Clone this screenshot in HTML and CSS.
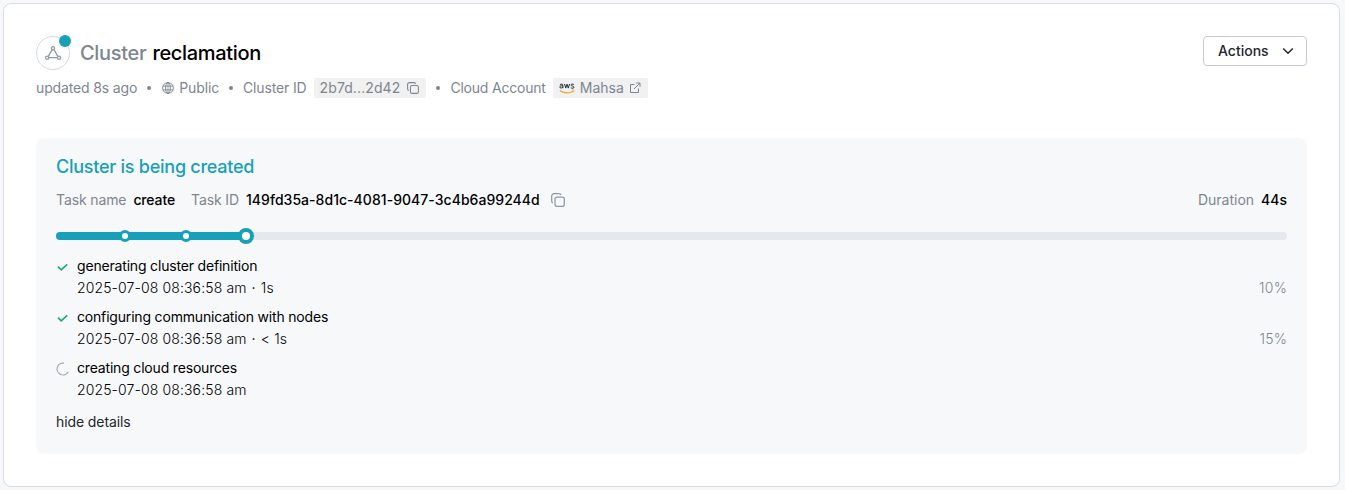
FILE: index.html
```html
<!DOCTYPE html>
<html lang="en">
<head>
<meta charset="utf-8">
<title>Cluster reclamation</title>
<link rel="stylesheet" href="styles.css">
</head>
<body>
<main class="card">
  <header class="header">
    <div class="title-row">
      <div class="avatar">
        <svg width="18" height="18" viewBox="0 0 18 18" fill="none" stroke="#8d99a8" stroke-width="1.3"><path d="M8.2 5.700 4.300 12.300M9.900 5.700l3.900 6.600M4.800 13.700h8.500"/><circle cx="9" cy="4.200" r="1.600"/><circle cx="3.100" cy="13.700" r="1.600"/><circle cx="15" cy="13.700" r="1.600"/></svg>
        <span class="status"></span>
      </div>
      <h1 class="title"><span class="title-kind">Cluster</span> <span class="title-name">reclamation</span></h1>
    </div>
    <button class="actions"><span>Actions</span>
      <svg width="12" height="8" viewBox="0 0 12 8" fill="none" stroke="#22262b" stroke-width="1.5"><path d="M1.2 1.5 6 6.2l4.8-4.7"/></svg>
    </button>
  </header>
  <div class="meta">
    <span class="updated">updated 8s ago</span>
    <i class="dot"></i>
    <span class="public">
      <svg width="12" height="12" viewBox="0 0 12 12" fill="none" stroke="#7d868f" stroke-width=".9"><circle cx="6" cy="6" r="5.4"/><ellipse cx="6" cy="6" rx="2.5" ry="5.4"/><path d="M.9 4.1h10.2M.9 7.9h10.2M6 .6v10.8"/></svg>
      <span>Public</span>
    </span>
    <i class="dot"></i>
    <span class="pair"><span class="cluster-label">Cluster ID</span>
      <span class="chip chip-id"><span class="cluster-id">2b7d...2d42</span>
        <svg width="12" height="12" viewBox="0 0 14 14" fill="none" stroke="#7d868f" stroke-width="1.25"><rect x="4" y="4" width="9.3" height="9.3" rx="2"/><path d="M2 10C1.1 9.700.7 9 .7 8V3C.7 1.600 1.600.7 3 .7h5c1 0 1.700.4 2 1.300"/></svg>
      </span>
    </span>
    <i class="dot"></i>
    <span class="pair"><span class="account-label">Cloud Account</span>
      <span class="chip chip-aws">
        <svg width="16" height="11" viewBox="0 0 16 11" fill="none"><g stroke="#27303c" stroke-width="1"><path d="M.9 1.600C2.500.8 3.900 1 3.900 2.300v2.900M3.900 2.900C2.300 2.600.8 2.800.8 4c0 1.500 2.300 1.300 3.100.1"/><path d="M5.500 1l1.300 4.100L8 1.200l1.300 3.900L10.500 1"/><path d="M14.900 1.500C13.500.8 12 1 12 2.100c0 1.200 3 .8 3 2.100 0 1.200-1.800 1.300-3.200.6"/></g><path d="M.8 7.500c4.100 2.900 9.200 3 13.400.8" stroke="#f7a036" stroke-width="1.250"/><path d="M12.800 7.100c1.600-.4 2.600-.1 2.200.9-.2.600-.4 1-.8 1.400" stroke="#f7a036" stroke-width=".9"/></svg>
        <span class="account">Mahsa</span>
        <svg width="12" height="12" viewBox="0 0 12 12" fill="none" stroke="#7d868f" stroke-width="1"><path d="M5.500 2.500H1.500v8h8V6.500M7.200 1h3.800v3.800M10.800 1.200 5 7"/></svg>
      </span>
    </span>
  </div>

  <section class="panel">
    <h2 class="panel-title">Cluster is being created</h2>
    <div class="task">
      <span class="muted task-label">Task name</span><b class="task-name">create</b>
      <span class="muted id-label">Task ID</span><b class="task-id">149fd35a-8d1c-4081-9047-3c4b6a99244d</b>
      <svg width="14" height="14" viewBox="0 0 14 14" fill="none" stroke="#8d98a5" stroke-width="1.25"><rect x="4" y="4" width="9.300" height="9.300" rx="2"/><path d="M2 10C1.100 9.700.7 9 .7 8V3C.7 1.600 1.600.7 3 .7h5c1 0 1.700.4 2 1.300"/></svg>
      <span class="duration"><span class="muted">Duration</span><b>44s</b></span>
    </div>
    <div class="progress">
      <div class="fill"></div>
      <span class="stop stop-1"></span>
      <span class="stop stop-2"></span>
      <span class="stop stop-current"></span>
    </div>
    <ul class="steps">
      <li class="step">
        <svg class="step-icon" width="12" height="12" viewBox="0 0 12 12" fill="none" stroke="#1bab76" stroke-width="1.700"><path d="M2 5.700 5.200 8.900 11.200 3.300"/></svg>
        <div class="step-body"><div class="step-name">generating cluster definition</div><div class="step-time">2025-07-08 08:36:58 am <span class="sep">·</span> 1s</div></div>
        <span class="percent">10%</span>
      </li>
      <li class="step">
        <svg class="step-icon" width="12" height="12" viewBox="0 0 12 12" fill="none" stroke="#1bab76" stroke-width="1.700"><path d="M2 5.700 5.200 8.900 11.200 3.300"/></svg>
        <div class="step-body"><div class="step-name">configuring communication with nodes</div><div class="step-time">2025-07-08 08:36:58 am <span class="sep">·</span> &lt; 1s</div></div>
        <span class="percent">15%</span>
      </li>
      <li class="step">
        <svg class="step-icon" width="14" height="14" viewBox="0 0 14 14" fill="none" stroke="#a2a7ad" stroke-width="1.200"><path d="M8 1.200A5.900 5.900 0 1 0 12.200 9.800"/></svg>
        <div class="step-body"><div class="step-name">creating cloud resources</div><div class="step-time">2025-07-08 08:36:58 am</div></div>
      </li>
    </ul>
    <a class="toggle">hide details</a>
  </section>
</main>
</body>
</html>
```
FILE: styles.css
```css
* { box-sizing: border-box; }
body { margin: 0; padding: 3px 5px 3px 3px; height: 490px; overflow: hidden; background: #f7f8fa; font-family: Inter, sans-serif; font-size: 14px; line-height: 22px; color: #000; }
svg { display: block; flex: none; }
b { font-weight: 500; }
.card { height: 484px; padding: 32px; background: #fff; border: 1px solid #d9dde2; border-radius: 8px; }
.header { display: flex; justify-content: space-between; height: 42px; }
.title-row { display: flex; gap: 10px; }
.avatar { position: relative; display: flex; align-items: center; justify-content: center; width: 34px; height: 34px; border: 1px solid #d5dae1; border-radius: 50%; }
.status { position: absolute; left: 22px; top: -2px; width: 12px; height: 12px; border-radius: 50%; background: #17a0b8; }
.title { margin: 0; font-size: 20px; line-height: 34px; font-weight: 550; letter-spacing: -0.32px; white-space: nowrap; }
.title-kind { color: #7d868f; }
.title-name { margin-left: 1px; }
.actions { display: flex; align-items: center; justify-content: space-between; width: 104px; height: 30px; padding: 0 12px 0 14px; background: #fff; border: 1px solid #c5ccd7; border-radius: 4px; font: 550 14px/20px Inter, sans-serif; color: #22262b; }
.meta { display: flex; align-items: center; height: 20px; color: #7d868f; letter-spacing: -0.14px; white-space: nowrap; }
.dot { flex: none; width: 4px; height: 4px; margin: 0 10px; border-radius: 50%; background: #7d868f; }
.public { display: flex; align-items: center; gap: 5px; margin-left: 1px; }
.pair { display: flex; align-items: center; gap: 7px; }
.account-label { letter-spacing: -0.2px; }
.cluster-id { letter-spacing: 0.1px; }
.chip { display: flex; align-items: center; height: 20px; padding: 0 6px; border-radius: 2px; background: #f1f1f1; }
.chip-id { gap: 7px; padding-right: 7px; }
.chip-aws { gap: 5px; padding-right: 7px; }
.account { letter-spacing: 0; }
.panel { height: 316px; margin-top: 40px; padding: 18px 20px; background: #f7f8fa; border-radius: 8px; }
.panel-title { margin: 0; font-size: 18px; line-height: 22px; font-weight: 550; letter-spacing: -0.25px; color: #17a0b8; }
.task { display: flex; align-items: center; height: 22px; margin-top: 11px; white-space: nowrap; }
.muted { color: #7d868f; }
.task-label, .task-name, .id-label { letter-spacing: -0.12px; }
.task-name, .task-id { margin-left: 7px; }
.task-id { letter-spacing: 0.04px; }
.id-label { margin-left: 16px; }
.task svg { margin-left: 11px; }
.duration { display: flex; gap: 7px; margin-left: auto; }
.progress { position: relative; height: 8px; margin-top: 21px; border-radius: 4px; background: #e5e8ed; }
.fill { width: 190px; height: 8px; border-radius: 4px; background: #17a0b8; }
.stop { position: absolute; width: 12px; height: 12px; top: -2px; border: 3px solid #17a0b8; border-radius: 50%; background: #fff; }
.stop-1 { left: 63px; }
.stop-2 { left: 124px; }
.stop-current { left: 182px; top: -4px; width: 16px; height: 16px; border-width: 4px; }
.steps { display: flex; flex-direction: column; gap: 7px; margin: 15px 0 0; padding: 0; list-style: none; }
.step { display: flex; height: 44px; }
.step-icon { margin-top: 6px; }
.step-body { margin-left: 9px; white-space: nowrap; }
.step:last-child .step-body { margin-left: 7px; }
.step:last-child .step-icon { margin-top: 5px; }
.step-name { letter-spacing: -0.18px; }
.step-time { font-weight: 300; letter-spacing: 0.12px; }
.sep { margin: 0 1px; font-weight: 400; }
.percent { align-self: flex-end; margin-left: auto; font-weight: 300; letter-spacing: 0.2px; color: #7d868f; }
.toggle { display: block; margin-top: 10px; letter-spacing: -0.1px; color: #22262b; }
```
